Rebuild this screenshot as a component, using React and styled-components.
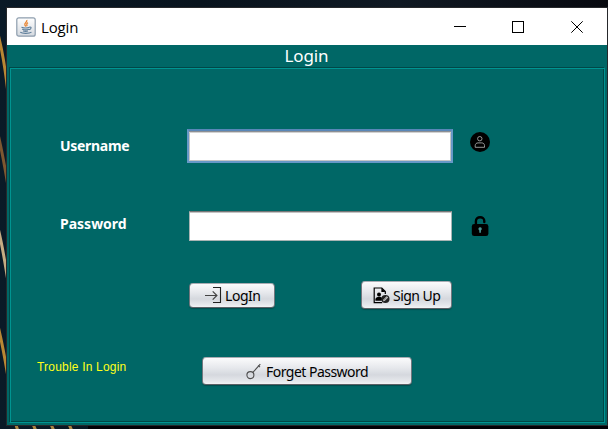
import React from 'react';
import styled, { createGlobalStyle } from 'styled-components';

const GlobalStyle = createGlobalStyle`
  * { box-sizing: border-box; }
  body { margin: 0; overflow: hidden; }
`;

const Desktop = styled.div`
  position: relative;
  width: 608px;
  height: 429px;
  padding: 8px 1px 4px 7px;
  background: linear-gradient(90deg, #0a1a27 0, #08131d 200px, #101923 400px, #07090f 608px);
`;

const Wallpaper = styled.svg`
  position: absolute;
  inset: 0;
`;

const Window = styled.div`
  position: relative;
  display: flex;
  flex-direction: column;
  width: 600px;
  height: 417px;
  background: #006766;
  box-shadow: 0 0 0 1px #26282b;
`;

const TitleBar = styled.header`
  display: flex;
  align-items: center;
  height: 37px;
  padding: 0 1px 0 9px;
  background: #fff;
`;

const Title = styled.span`
  flex: 1;
  margin-left: 5px;
  padding-top: 1px;
  font: 15px/37px "Open Sans", "Noto Sans", sans-serif;
  letter-spacing: -0.15px;
  color: #000;
`;

const WindowButton = styled.button`
  display: grid;
  place-items: center;
  width: 58.5px;
  height: 37px;
  padding: 0;
  border: 0;
  background: none;
`;

const Heading = styled.h1`
  height: 22px;
  margin: 0;
  padding-right: 1px;
  text-align: center;
  font: 17px/22px "Noto Sans", sans-serif;
  letter-spacing: -0.1px;
  color: #fff;
`;

const Group = styled.div`
  height: 356px;
  margin: 0 2px;
  border: 1px solid;
  border-color: #004847 #009491 #009491 #004847;
  box-shadow: inset 1px 1px #009491, inset -1px -1px #004847;
`;

const Row = styled.div`
  display: flex;
  align-items: flex-start;
  height: ${(p) => p.$height}px;
  padding: ${(p) => p.$top}px 0 0 ${(p) => p.$left}px;
`;

const Label = styled.label`
  width: ${(p) => p.$width}px;
  font: bold 14px/${(p) => p.$line}px "Noto Sans", sans-serif;
  letter-spacing: ${(p) => p.$spacing}px;
  white-space: nowrap;
  color: #fff;
`;

const Field = styled.input`
  width: ${(p) => (p.$focused ? 266 : 263)}px;
  height: ${(p) => (p.$focused ? 34 : 30)}px;
  padding: 4px 7px;
  border: ${(p) => (p.$focused ? '2px solid #6798c7' : '1px solid #a8b4b4')};
  border-top-color: ${(p) => (p.$focused ? '#5987b8' : '#777')};
  border-radius: 0;
  outline: 0;
  background: #fff;
  box-shadow: ${(p) =>
    p.$focused
      ? 'inset 0 1px #8c8f94, inset 0 2px #d2d2d2, inset 0 0 0 1px #c5c5c5'
      : 'inset 0 1px #c4c4c4'};
`;

const FieldIcon = styled.svg`
  flex: none;
  margin: ${(p) => p.$top}px 0 0 ${(p) => p.$left}px;
`;

const Button = styled.button`
  display: flex;
  align-items: center;
  width: ${(p) => p.$width}px;
  height: ${(p) => p.$height}px;
  margin: ${(p) => p.$top || 0}px 0 0 ${(p) => p.$left || 0}px;
  padding: 0 0 0 ${(p) => p.$inset}px;
  gap: ${(p) => p.$gap}px;
  border: 1px solid;
  border-color: #a9acb3 #73777e #5c6066;
  border-radius: 4px;
  background: linear-gradient(#fbfbfc 0%, #e6e8ec 38%, #d5d8de 65%, #e5e7eb 88%, #f2f3f5 100%);
  box-shadow: 0 1px 1px #004d4d;
  font: 14px/20px "Noto Sans", sans-serif;
  letter-spacing: ${(p) => p.$spacing}px;
  white-space: nowrap;
  color: #000;
`;

const Caption = styled.span`
  padding-top: 1px;
`;

const Trouble = styled.span`
  width: 165px;
  padding-top: 1px;
  font: 12px/18px "Liberation Sans", Arial, sans-serif;
  letter-spacing: 0.2px;
  color: #ffff19;
`;

function JavaIcon() {
  return (
    <svg width="20" height="20" viewBox="0 0 20 20" fill="none">
      <defs>
        <linearGradient id="tile" x2="0" y2="1">
          <stop stopColor="#fff" />
          <stop offset="1" stopColor="#d4d9df" />
        </linearGradient>
      </defs>
      <rect x=".8" y=".8" width="18.4" height="18.4" rx="2" fill="url(#tile)" stroke="#8d9dad" strokeWidth="1.2" />
      <path d="M10.8 3c.8 2-2.9 3-1.9 5 .3.7.8 1 .9 1.7M12 5.6c-2.3 1.2-1.3 2-.9 3.6" stroke="#e98532" strokeWidth="1.3" />
      <path d="M5.5 10.2c2 .8 6 .8 8 0M6.2 12.2c2 .8 5 .8 6.7 0M7 14c2 .6 3.4.6 5 0M13.5 10c2.3-.4 2 2.3-.5 2.6M4.3 15.3c2 1.4 9 1.4 11.2-.2" stroke="#5f7f9b" strokeWidth="1.15" />
    </svg>
  );
}

function UserIcon() {
  return (
    <FieldIcon $top={3} $left={17} width="20" height="20" viewBox="0 0 20 20" fill="none">
      <circle cx="10" cy="10" r="10" fill="#000" />
      <circle cx="9.8" cy="6.7" r="2.2" stroke="#bbb" strokeWidth=".8" />
      <path d="M5.2 15.3v-1.6c0-1.8 1.2-2.8 2.8-2.8h3.7c1.7 0 2.8 1 2.8 2.8v1.6z" stroke="#bbb" strokeWidth=".8" strokeLinejoin="round" />
    </FieldIcon>
  );
}

function LockIcon() {
  return (
    <FieldIcon $top={5} $left={19} width="18" height="21" viewBox="0 0 18 21" fill="none">
      <path d="M4.9 9V5.2C4.9-.1 13.3-.1 13.3 5v1" stroke="#000" strokeWidth="2.4" strokeLinecap="round" />
      <rect x=".8" y="8" width="16.6" height="12.1" rx="2.4" fill="#000" />
      <path d="M9.1 11.2a1.7 1.7 0 0 1 .8 3.2v2.3H8.3v-2.3a1.7 1.7 0 0 1 .8-3.2z" fill="#4b9594" />
    </FieldIcon>
  );
}

function EnterIcon() {
  return (
    <svg width="17" height="17" viewBox="0 0 17 17" fill="none">
      <path d="M8 .5h7.5v15H8" stroke="#222" strokeWidth="1.1" />
      <path d="M0 8.5h11.7M7.7 4.3l4.2 4.2-4.2 4.2" stroke="#444" strokeWidth="1.2" />
    </svg>
  );
}

function RegisterIcon() {
  return (
    <svg width="17" height="17" viewBox="0 0 17 17" fill="none">
      <path d="M12.3 7V4.5L8.8 1H1.2v14.7h8" stroke="#000" strokeWidth="1.2" />
      <path d="M8.4 1v4h4z" fill="#000" />
      <circle cx="6" cy="7.5" r="2" fill="#000" />
      <path d="M2.4 13.8v-1.3c0-3.4 6.2-3.5 7-.9l-.8 2.2z" fill="#000" />
      <circle cx="12.4" cy="12" r="4.1" fill="#222" />
      <path d="M10 14.3l.5-1.9 3.2-3.2 1.4 1.4-3.2 3.2z" fill="#ddd" />
      <path d="M10.9 13.4l3-3" stroke="#333" strokeWidth=".6" />
    </svg>
  );
}

function KeyIcon() {
  return (
    <svg width="16" height="17" viewBox="0 0 16 17" fill="none" stroke="#4d4d4d" strokeWidth="1.1">
      <circle cx="4.4" cy="12.1" r="3.5" />
      <path d="M6.9 9.4L14.3 1.2M12.1 2.4l1.9 1.8" />
    </svg>
  );
}

export default function App() {
  return (
    <Desktop>
      <GlobalStyle />
      <Wallpaper width="608" height="429" fill="none" strokeWidth="3">
        <path d="M88 429h520v-8H88z" fill="#020207" />
        <path d="M-2 34Q4 57 8 93M-2 326Q3 346 9 383" stroke="#b88733" />
        <path d="M-2 134Q3 155 9 192" stroke="#7d5730" />
        <path d="M-2 228Q3 248 9 288" stroke="#c5ac82" />
        <path d="M15 422l3 9M32 422l4 9M50 422l4 9M68 422l4 9" stroke="#a98543" />
      </Wallpaper>
      <Window>
        <TitleBar>
          <JavaIcon />
          <Title>Login</Title>
          <WindowButton aria-label="Minimize">
            <svg width="12" height="12" shapeRendering="crispEdges"><path d="M0 5.5h12" stroke="#000" /></svg>
          </WindowButton>
          <WindowButton aria-label="Maximize">
            <svg width="12" height="12" shapeRendering="crispEdges"><rect x=".5" y=".5" width="11" height="11" fill="none" stroke="#000" /></svg>
          </WindowButton>
          <WindowButton aria-label="Close">
            <svg width="12" height="12"><path d="M.3.3l11.4 11.4M11.7.3L.3 11.7" stroke="#000" /></svg>
          </WindowButton>
        </TitleBar>
        <Heading>Login</Heading>
        <Group>
          <Row $height={142} $top={61} $left={50}>
            <Label $width={127} $line={34} $spacing={-0.3}>Username</Label>
            <Field $focused aria-label="Username" />
            <UserIcon />
          </Row>
          <Row $height={71} $top={1} $left={50}>
            <Label $width={129} $line={26} $spacing={0}>Password</Label>
            <Field type="password" aria-label="Password" />
            <LockIcon />
          </Row>
          <Row $height={76} $top={0} $left={179}>
            <Button $width={86} $height={25} $top={2} $inset={15} $gap={3} $spacing={-0.45}>
              <EnterIcon /><Caption>LogIn</Caption>
            </Button>
            <Button $width={91} $height={28} $left={86} $inset={11} $gap={3} $spacing={-0.55}>
              <RegisterIcon /><Caption>Sign Up</Caption>
            </Button>
          </Row>
          <Row $height={30} $top={0} $left={27}>
            <Trouble>Trouble In Login</Trouble>
            <Button $width={210} $height={28} $inset={43} $gap={4} $spacing={-0.52}>
              <KeyIcon /><Caption>Forget Password</Caption>
            </Button>
          </Row>
        </Group>
      </Window>
    </Desktop>
  );
}
